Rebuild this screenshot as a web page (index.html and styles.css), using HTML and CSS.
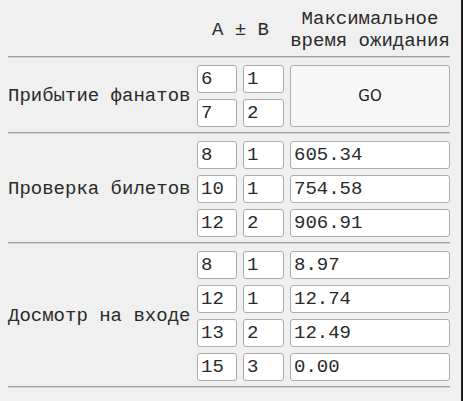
FILE: index.html
```html
<!DOCTYPE html>
<html lang="ru">
<head>
<meta charset="utf-8">
<title>Очередь</title>
<link rel="stylesheet" href="styles.css">
</head>
<body>
<div class="panel">
  <div class="head">
    <div class="h-ab">A ± B</div>
    <div class="h-max">Максимальное<br>время ожидания</div>
  </div>
  <div class="rule"></div>
  <div class="group">
    <div class="label rows-2">Прибытие фанатов</div>
    <input class="field" value="6"><input class="field" value="1">
    <button class="go">GO</button>
    <input class="field" value="7"><input class="field" value="2">
  </div>
  <div class="rule"></div>
  <div class="group">
    <div class="label rows-3">Проверка билетов</div>
    <input class="field" value="8"><input class="field" value="1"><input class="field" value="605.34">
    <input class="field" value="10"><input class="field" value="1"><input class="field" value="754.58">
    <input class="field" value="12"><input class="field" value="2"><input class="field" value="906.91">
  </div>
  <div class="rule"></div>
  <div class="group">
    <div class="label rows-4">Досмотр на входе</div>
    <input class="field" value="8"><input class="field" value="1"><input class="field" value="8.97">
    <input class="field" value="12"><input class="field" value="1"><input class="field" value="12.74">
    <input class="field" value="13"><input class="field" value="2"><input class="field" value="12.49">
    <input class="field" value="15"><input class="field" value="3"><input class="field" value="0.00">
  </div>
  <div class="rule"></div>
</div>
</body>
</html>
```

FILE: styles.css
```css
html {
  box-sizing: border-box;
  min-height: 100vh;
  background: #f0f0f0;
  border-right: 2px solid #1e1e1e;
}
body {
  margin: 8px;
  background: #f0f0f0;
  font-family: "Liberation Mono", "Courier New", monospace;
  font-size: 19px;
  color: #2a2a2a;
}
.panel {
  width: 442px;
}
.head {
  display: grid;
  grid-template-columns: 183px 40px 41px 160px;
  column-gap: 6px;
  align-items: center;
  height: 44px;
  line-height: 22px;
  margin-bottom: 4px;
}
.h-ab {
  grid-column: 2 / 4;
  text-align: center;
  white-space: nowrap;
}
.h-max {
  grid-column: 4;
  text-align: center;
  white-space: nowrap;
}
.rule {
  height: 0;
  border-top: 1px solid #a0a0a0;
  border-bottom: 1px solid #d2d2d2;
}
.group {
  display: grid;
  grid-template-columns: 183px 40px 41px 160px;
  grid-auto-rows: 28px;
  column-gap: 6px;
  row-gap: 6px;
  padding: 7px 0 5px;
}
.label {
  grid-column: 1;
  align-self: center;
  white-space: nowrap;
}
.rows-2 { grid-row: 1 / 3; }
.rows-3 { grid-row: 1 / 4; }
.rows-4 { grid-row: 1 / 5; }
.field {
  box-sizing: border-box;
  width: 100%;
  height: 28px;
  margin: 0;
  padding: 0 3px;
  border: 1px solid #acacac;
  border-radius: 3px;
  background: #fff;
  font-family: "Liberation Mono", "Courier New", monospace;
  font-size: 19px;
  color: #2a2a2a;
}
.go {
  grid-column: 4;
  grid-row: 1 / 3;
  box-sizing: border-box;
  margin: 0;
  border: 1px solid #adadad;
  border-radius: 3px;
  background: #f7f7f7;
  font-family: "DejaVu Sans", "Liberation Sans", sans-serif;
  font-size: 15px;
  color: #222;
}
```
